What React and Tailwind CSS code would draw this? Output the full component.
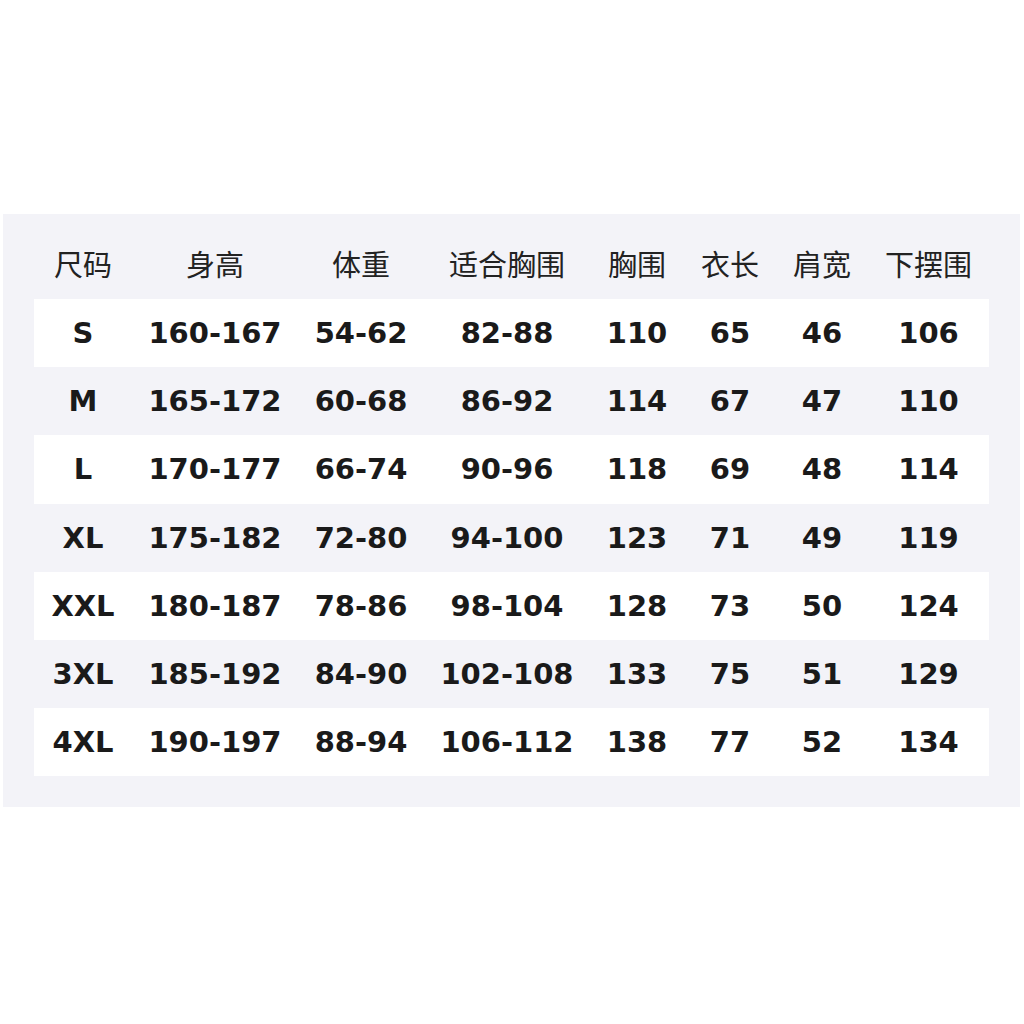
const headers = ["尺码", "身高", "体重", "适合胸围", "胸围", "衣长", "肩宽", "下摆围"];

const rows = [
  ["S", "160-167", "54-62", "82-88", "110", "65", "46", "106"],
  ["M", "165-172", "60-68", "86-92", "114", "67", "47", "110"],
  ["L", "170-177", "66-74", "90-96", "118", "69", "48", "114"],
  ["XL", "175-182", "72-80", "94-100", "123", "71", "49", "119"],
  ["XXL", "180-187", "78-86", "98-104", "128", "73", "50", "124"],
  ["3XL", "185-192", "84-90", "102-108", "133", "75", "51", "129"],
  ["4XL", "190-197", "88-94", "106-112", "138", "77", "52", "134"],
];

const cols = "grid grid-cols-[98px_166px_126px_166px_94px_92px_92px_121px]";

export default function App() {
  return (
    <div className="w-[1024px] h-[1024px] bg-white pt-[214px] pl-[3px]">
      <div className="w-[1017px] bg-[#f3f3f8] px-[31px] pb-[31px]">
        {/* Header */}
        <div
          className={`${cols} h-[85px] pt-[13px] items-center text-[29px] text-[#222]`}
          style={{ fontFamily: '"Noto Sans CJK SC", "Noto Sans", sans-serif' }}
        >
          {headers.map((h) => (
            <div key={h} className="text-center leading-none">
              {h}
            </div>
          ))}
        </div>

        {/* Rows */}
        {rows.map((r, i) => (
          <div
            key={r[0]}
            className={`${cols} h-[68.2px] pt-[1px] items-center text-[29px] font-bold text-[#1a1a1a] ${
              i % 2 === 0 ? "bg-white" : "bg-[#f3f3f8]"
            }`}
            style={{ fontFamily: '"DejaVu Sans", Verdana, sans-serif' }}
          >
            {r.map((c, j) => (
              <div key={j} className="text-center leading-none">
                {c}
              </div>
            ))}
          </div>
        ))}
      </div>
    </div>
  );
}
